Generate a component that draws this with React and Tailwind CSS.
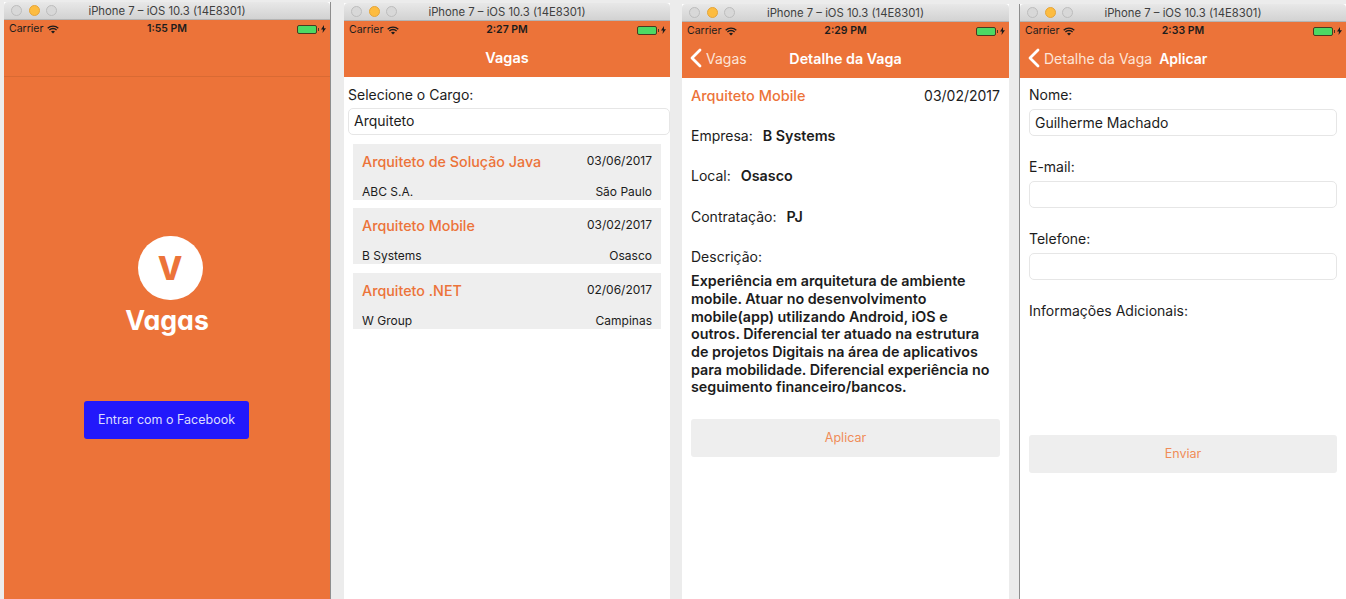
import React from 'react';

const Wifi = () => (
  <svg width="12" height="9" viewBox="0 0 12 9" fill="none" stroke="#1c1c1c" strokeWidth="1.3">
    <path d="M.7 3.2a7.6 7.6 0 0 1 10.6 0" />
    <path d="M2.4 5a5.1 5.1 0 0 1 7.2 0" />
    <path d="M6 8.6 4 6.6a2.9 2.9 0 0 1 4 0z" fill="#1c1c1c" stroke="none" />
  </svg>
);

const Battery = () => (
  <div className="flex items-center">
    <div className="w-[20px] h-[9px] rounded-[2px] border border-[#4a3a20] bg-[#4cd964]" />
    <div className="w-[1px] h-[3px] bg-[#4a3a20] ml-[1px]" />
    <svg width="5" height="8" viewBox="0 0 5 8" className="ml-[2px]">
      <path d="M3 0 0 4.5h2L1.5 8 5 3.2H3z" fill="#1c1c1c" />
    </svg>
  </div>
);

const Chevron = () => (
  <svg width="12" height="20" viewBox="0 0 12 20" fill="none" stroke="white" strokeWidth="2.8" strokeLinecap="round" strokeLinejoin="round">
    <path d="M10 2 2 10l8 8" />
  </svg>
);

const Phone = ({ className, time, nav, noBar, children }) => (
  <div className={`h-[610px] shrink-0 flex flex-col bg-white ${className}`}>
    <div className="h-[18px] relative flex items-center justify-center rounded-t-[4px] bg-gradient-to-b from-[#e8e8e8] to-[#d2d2d2] border-b border-[#b4b4b4]">
      <div className="absolute left-[7px] top-[3px] flex gap-[6.5px]">
        <span className="w-[11px] h-[11px] rounded-full bg-[#d8d8d8] border border-[#bdbdbd]" />
        <span className="w-[11px] h-[11px] rounded-full bg-[#fdbc40] border border-[#e5a53a]" />
        <span className="w-[11px] h-[11px] rounded-full bg-[#d8d8d8] border border-[#bdbdbd]" />
      </div>
      <span className="mt-[2px] text-[11.3px] text-[#3f3f3f]">iPhone 7 – iOS 10.3 (14E8301)</span>
    </div>
    <div className={`bg-[#ec7339] flex flex-col shrink-0 ${noBar ? 'h-[57px] border-b border-[#d96a33]' : 'h-[56px]'}`}>
      <div className="h-[18px] pl-[5px] pr-[4px] flex items-center justify-between relative text-[10.5px] text-[#1c1c1c]">
        <div className="flex items-center gap-[4px]">
          <span>Carrier</span>
          <Wifi />
        </div>
        <span className="absolute left-0 right-0 text-center font-semibold pointer-events-none">{time}</span>
        <Battery />
      </div>
      {nav}
    </div>
    {children}
  </div>
);

const JobCard = ({ title, date, company, city }) => (
  <div className="h-[56px] bg-[#eeeeee] px-[9px] pb-[1px] flex flex-col justify-between">
    <div className="flex justify-between pt-[8px]">
      <span className="text-[14.3px] leading-[19px] font-medium text-[#ec7339]">{title}</span>
      <span className="text-[12px] leading-[18px] text-[#1c1c1c]">{date}</span>
    </div>
    <div className="flex justify-between text-[12px] leading-[14px] text-[#1c1c1c]">
      <span>{company}</span>
      <span>{city}</span>
    </div>
  </div>
);

const Info = ({ label, value }) => (
  <div className="flex gap-[10px] text-[14px] leading-[18px] text-[#1c1c1c]">
    <span>{label}</span>
    <span className="font-semibold text-[14.3px]">{value}</span>
  </div>
);

const Field = ({ label, value }) => (
  <div className="h-[72px]">
    <div className="text-[14px] leading-[18px] text-[#1c1c1c]">{label}</div>
    <div className="mt-[5px] h-[27px] rounded-[5px] border border-[#e6e6e6] px-[5px] flex items-center text-[14px] text-[#1c1c1c]">{value}</div>
  </div>
);

const App = () => (
  <div className="h-[599px] w-[1346px] overflow-hidden bg-[#ececec] flex items-start font-['Inter',sans-serif]">
    <Phone className="w-[327px] ml-[4px] mt-[2px] border-r border-[#8e8e8e]" time="1:55 PM" noBar>
      <div className="flex-1 bg-[#ec7339] flex flex-col items-center">
        <div className="mt-[159px] ml-[6px] w-[65px] h-[64px] rounded-full bg-white flex items-center justify-center pt-[2px] text-[32px] font-extrabold text-[#ec7339]">V</div>
        <div className="mt-[2px] text-[26.7px] leading-[36px] font-bold text-white [font-feature-settings:'cv11'_1]">Vagas</div>
        <div className="mt-[63px] mr-[1px] w-[165px] h-[38px] rounded-[3px] bg-[#2218fb] flex items-center justify-center text-[12.5px] text-[#dcdcff]">Entrar com o Facebook</div>
      </div>
    </Phone>

    <Phone
      className="w-[326px] ml-[13px] mt-[3px]"
      time="2:27 PM"
      nav={<div className="flex-1 flex items-center justify-center text-[14.5px] font-semibold text-white">Vagas</div>}
    >
      <div className="pl-[4px] pt-[9px]">
        <div className="text-[14px] leading-[18px] text-[#1c1c1c]">Selecione o Cargo:</div>
        <div className="mt-[4px] h-[27px] rounded-[5px] border border-[#e6e6e6] px-[5px] pb-[2px] flex items-center text-[14px] text-[#1c1c1c]">Arquiteto</div>
        <div className="mt-[9px] ml-[5px] mr-[9px] flex flex-col gap-[8.4px]">
          <JobCard title="Arquiteto de Solução Java" date="03/06/2017" company="ABC S.A." city="São Paulo" />
          <JobCard title="Arquiteto Mobile" date="03/02/2017" company="B Systems" city="Osasco" />
          <JobCard title="Arquiteto .NET" date="02/06/2017" company="W Group" city="Campinas" />
        </div>
      </div>
    </Phone>

    <Phone
      className="w-[327px] ml-[12px] mt-[4px]"
      time="2:29 PM"
      nav={
        <div className="flex-1 flex items-center relative text-white pl-[8px]">
          <span className="mb-[2px]"><Chevron /></span>
          <span className="ml-[4px] mb-[2px] text-[14px] text-[#fde4d7]">Vagas</span>
          <span className="absolute left-0 right-0 text-center text-[14.3px] font-semibold">Detalhe da Vaga</span>
        </div>
      }
    >
      <div className="px-[9px] pt-[9px]">
        <div className="flex justify-between leading-[18px]">
          <span className="text-[14.5px] font-medium text-[#ec7339]">Arquiteto Mobile</span>
          <span className="text-[14px] text-[#1c1c1c]">03/02/2017</span>
        </div>
        <div className="mt-[22px] flex flex-col gap-[22.4px]">
          <Info label="Empresa:" value="B Systems" />
          <Info label="Local:" value="Osasco" />
          <Info label="Contratação:" value="PJ" />
        </div>
        <div className="mt-[22.4px] text-[14px] leading-[18px] text-[#1c1c1c]">Descrição:</div>
        <p className="mt-[6px] pr-[6px] text-[14.3px] leading-[17.7px] font-semibold text-[#1c1c1c]">
          Experiência em arquitetura de ambiente mobile. Atuar no desenvolvimento mobile(app) utilizando Android, iOS e outros. Diferencial ter atuado na estrutura de projetos Digitais na área de aplicativos para mobilidade. Diferencial experiência no seguimento financeiro/bancos.
        </p>
        <div className="mt-[23px] h-[38px] pt-[1px] rounded-[3px] bg-[#eeeeee] flex items-center justify-center text-[12.5px] text-[#f08c58]">Aplicar</div>
      </div>
    </Phone>

    <Phone
      className="w-[327px] ml-[10px] mt-[4px] border-l border-[#8e8e8e]"
      time="2:33 PM"
      nav={
        <div className="flex-1 flex items-center text-[14px] text-white pl-[8px] pb-[2px]">
          <Chevron />
          <span className="ml-[4px] text-[#fde4d7]">Detalhe da Vaga</span>
          <span className="ml-[7px] font-semibold">Aplicar</span>
        </div>
      }
    >
      <div className="pl-[9px] pr-[9px] pt-[8px]">
        <Field label="Nome:" value="Guilherme Machado" />
        <Field label="E-mail:" value="" />
        <Field label="Telefone:" value="" />
        <div className="text-[14px] leading-[18px] text-[#1c1c1c]">Informações Adicionais:</div>
        <div className="mt-[115px] h-[38px] pt-[1px] rounded-[3px] bg-[#eeeeee] flex items-center justify-center text-[12.5px] text-[#f08c58]">Enviar</div>
      </div>
    </Phone>
  </div>
);

export default App;
